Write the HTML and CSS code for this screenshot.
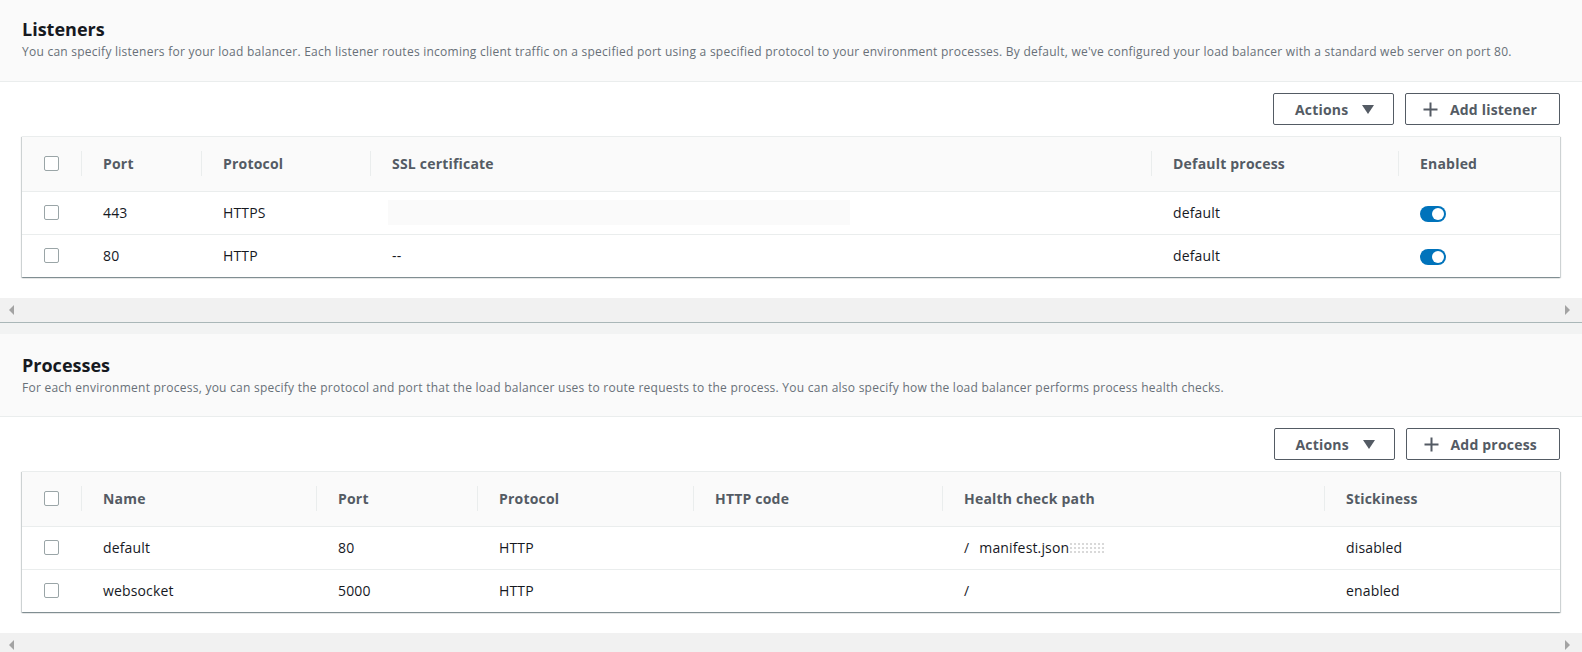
FILE: index.html
```html
<!DOCTYPE html>
<html lang="en">
<head>
<meta charset="utf-8">
<title>Load balancer</title>
<link rel="stylesheet" href="styles.css">
</head>
<body>
<div class="page">
  <section class="panel panel-first">
    <header class="panel-header">
      <h2 class="panel-title">Listeners</h2>
      <p class="panel-desc">You can specify listeners for your load balancer. Each listener routes incoming client traffic on a specified port using a specified protocol to your environment processes. By default, we've configured your load balancer with a standard web server on port 80.</p>
    </header>
    <div class="panel-body">
      <div class="toolbar">
        <button class="btn btn-actions">Actions <svg class="caret" width="12" height="9" viewBox="0 0 12 9"><polygon points="0,0 12,0 6,9" fill="#545b64"/></svg></button>
        <button class="btn btn-add"><svg class="plus" width="15" height="15" viewBox="0 0 15 15"><path d="M7.5 0.5v14M0.5 7.5h14" stroke="#545b64" stroke-width="2" fill="none"/></svg>Add listener</button>
      </div>
      <div class="table-wrap">
        <table class="tbl">
          <colgroup>
            <col class="c-check"><col style="width:120px"><col style="width:169px"><col style="width:781px"><col style="width:247px"><col>
          </colgroup>
          <thead>
            <tr>
              <th class="th-check"><span class="cb"></span></th>
              <th><div class="th-inner">Port</div></th>
              <th><div class="th-inner">Protocol</div></th>
              <th><div class="th-inner">SSL certificate</div></th>
              <th><div class="th-inner">Default process</div></th>
              <th><div class="th-inner">Enabled</div></th>
            </tr>
          </thead>
          <tbody>
            <tr>
              <td class="td-check"><span class="cb"></span></td>
              <td>443</td>
              <td>HTTPS</td>
              <td class="td-ssl"><div class="redacted"></div></td>
              <td>default</td>
              <td><span class="toggle"><span class="knob"></span></span></td>
            </tr>
            <tr>
              <td class="td-check"><span class="cb"></span></td>
              <td>80</td>
              <td>HTTP</td>
              <td>--</td>
              <td>default</td>
              <td><span class="toggle"><span class="knob"></span></span></td>
            </tr>
          </tbody>
        </table>
      </div>
    </div>
    <div class="hscroll"><span class="arrow arrow-left"></span><span class="arrow arrow-right"></span></div>
  </section>

  <section class="panel">
    <header class="panel-header">
      <h2 class="panel-title">Processes</h2>
      <p class="panel-desc">For each environment process, you can specify the protocol and port that the load balancer uses to route requests to the process. You can also specify how the load balancer performs process health checks.</p>
    </header>
    <div class="panel-body">
      <div class="toolbar">
        <button class="btn btn-actions">Actions <svg class="caret" width="12" height="9" viewBox="0 0 12 9"><polygon points="0,0 12,0 6,9" fill="#545b64"/></svg></button>
        <button class="btn btn-add"><svg class="plus" width="15" height="15" viewBox="0 0 15 15"><path d="M7.5 0.5v14M0.5 7.5h14" stroke="#545b64" stroke-width="2" fill="none"/></svg>Add process</button>
      </div>
      <div class="table-wrap">
        <table class="tbl">
          <colgroup>
            <col class="c-check"><col style="width:235px"><col style="width:161px"><col style="width:216px"><col style="width:249px"><col style="width:382px"><col>
          </colgroup>
          <thead>
            <tr>
              <th class="th-check"><span class="cb"></span></th>
              <th><div class="th-inner">Name</div></th>
              <th><div class="th-inner">Port</div></th>
              <th><div class="th-inner">Protocol</div></th>
              <th><div class="th-inner">HTTP code</div></th>
              <th><div class="th-inner">Health check path</div></th>
              <th><div class="th-inner">Stickiness</div></th>
            </tr>
          </thead>
          <tbody>
            <tr>
              <td class="td-check"><span class="cb"></span></td>
              <td>default</td>
              <td>80</td>
              <td>HTTP</td>
              <td></td>
              <td><span class="slash">/</span><span class="path-blur">manifest.json</span><span class="noise"></span></td>
              <td>disabled</td>
            </tr>
            <tr>
              <td class="td-check"><span class="cb"></span></td>
              <td>websocket</td>
              <td>5000</td>
              <td>HTTP</td>
              <td></td>
              <td>/</td>
              <td>enabled</td>
            </tr>
          </tbody>
        </table>
      </div>
    </div>
    <div class="hscroll"><span class="arrow arrow-left"></span><span class="arrow arrow-right"></span></div>
  </section>
</div>
</body>
</html>
```

FILE: styles.css
```css
* { box-sizing: border-box; }

html, body {
  margin: 0;
  padding: 0;
}

body {
  background: #f2f3f3;
  font-family: "Open Sans", "Noto Sans", sans-serif;
  color: #16191f;
  font-size: 14px;
}

.page {
  display: flex;
  flex-direction: column;
  gap: 11px;
}

.panel {
  background: #ffffff;
  border-bottom: 1px solid #aab7b8;
}

.panel-header {
  background: #fafafa;
  border-bottom: 1px solid #eaeded;
  padding: 20px 22px 20px 22px;
}

.panel-first .panel-header {
  padding-top: 18px;
  padding-bottom: 21px;
}

.panel-title {
  margin: 0;
  font-size: 18px;
  line-height: 22px;
  font-weight: 700;
  color: #16191f;
}

.panel-desc {
  margin: 4px 0 0 0;
  font-size: 12px;
  line-height: 16px;
  color: #687078;
  letter-spacing: 0.25px;
  white-space: nowrap;
}

.panel-body {
  padding: 11px 22px 21px 22px;
}

.toolbar {
  display: flex;
  justify-content: flex-end;
  gap: 11px;
  margin-bottom: 11px;
}

.btn {
  height: 32px;
  display: inline-flex;
  align-items: center;
  background: #ffffff;
  border: 1px solid #545b64;
  border-radius: 2px;
  color: #545b64;
  font-family: inherit;
  font-size: 14px;
  font-weight: 700;
  letter-spacing: 0.2px;
  cursor: pointer;
}

.btn-actions {
  width: 121px;
  padding: 0 0 0 21px;
  gap: 14px;
}

.btn-add {
  padding: 0 22px 0 17px;
  gap: 12px;
}

.caret, .plus { display: block; flex: none; }

.table-wrap {
  background: #ffffff;
  border-top: 1px solid #eaeded;
  box-shadow: 0 1px 1px 0 rgba(0, 28, 36, 0.3), 1px 1px 1px 0 rgba(0, 28, 36, 0.15), -1px 1px 1px 0 rgba(0, 28, 36, 0.15);
}

.tbl {
  width: 100%;
  border-collapse: collapse;
  table-layout: fixed;
}

.c-check { width: 59px; }

.tbl th {
  background: #fafafa;
  height: 54px;
  padding: 0;
  text-align: left;
  font-weight: 700;
  font-size: 14px;
  letter-spacing: 0.2px;
  color: #545b64;
  border-bottom: 1px solid #eaeded;
  vertical-align: middle;
}

.th-inner {
  border-left: 1px solid #eaeded;
  padding-left: 21px;
  height: 25px;
  line-height: 25px;
  white-space: nowrap;
}

.th-check, .td-check {
  padding-left: 22px !important;
}

.tbl td {
  height: 43px;
  padding: 0 0 0 22px;
  vertical-align: middle;
  border-bottom: 1px solid #eaeded;
  white-space: nowrap;
  letter-spacing: 0.15px;
  color: #16191f;
}

.tbl tbody tr:last-child td { border-bottom: none; }

.cb {
  display: block;
  width: 15px;
  height: 15px;
  border: 1px solid #9aa5a7;
  border-radius: 2px;
  background: #ffffff;
}

.td-ssl { padding-left: 18px !important; }

.redacted {
  width: 462px;
  height: 25px;
  background: #fafafa;
}

.toggle {
  display: inline-flex;
  justify-content: flex-end;
  align-items: center;
  width: 26px;
  height: 16px;
  border-radius: 8px;
  background: #0073bb;
  padding: 2px;
  vertical-align: middle;
}

.knob {
  width: 12px;
  height: 12px;
  border-radius: 50%;
  background: #ffffff;
}

.slash {
  display: inline-block;
  margin-right: 10px;
}

.path-blur {
  background: #ffffff;
}

.noise {
  display: inline-block;
  width: 36px;
  height: 12px;
  vertical-align: -1px;
  background-image: radial-gradient(circle, #c9c9c9 0.8px, transparent 1px);
  background-size: 4px 4px;
  opacity: 0.7;
}

.hscroll {
  height: 24px;
  background: #f1f1f1;
  display: flex;
  align-items: center;
  justify-content: space-between;
  padding: 0 12px 0 9px;
}

.arrow {
  width: 0;
  height: 0;
  border-top: 5px solid transparent;
  border-bottom: 5px solid transparent;
}

.arrow-left { border-right: 5px solid #a3a3a3; }
.arrow-right { border-left: 5px solid #a3a3a3; }
```
